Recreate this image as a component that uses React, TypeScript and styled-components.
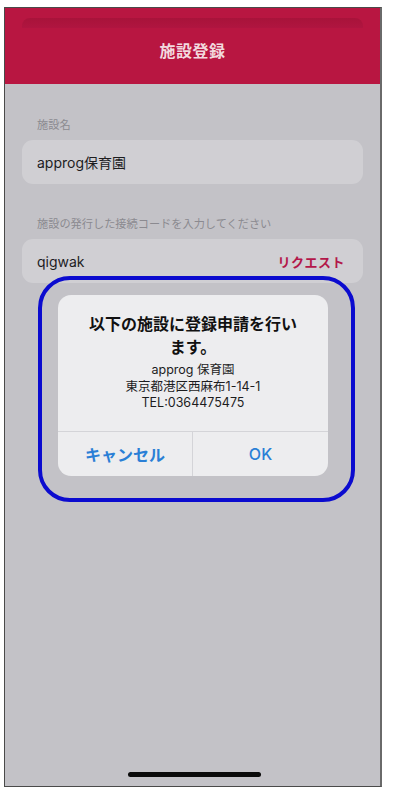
import React from 'react';
import styled, { createGlobalStyle } from 'styled-components';

const GlobalStyle = createGlobalStyle`
  html, body {
    margin: 0;
    padding: 0;
    background: #ffffff;
  }
  body {
    font-family: Inter, 'Noto Sans CJK JP', 'Noto Sans', sans-serif;
  }
`;

const Phone = styled.div`
  position: relative;
  box-sizing: border-box;
  width: 378px;
  height: 780px;
  margin: 7px 0 0 4px;
  border: 1px solid #4a4a4a;
  border-right: 2px solid #6a6a6a;
  display: flex;
  flex-direction: column;
  background: #c3c2c7;
  overflow: hidden;
`;

const Header = styled.header`
  height: 76px;
  background: #b81641;
  display: flex;
  flex-direction: column;
  align-items: stretch;
`;

const SheetEdge = styled.div`
  margin: 10px 17px 0;
  height: 10px;
  border-radius: 8px 8px 0 0;
  background: linear-gradient(#a8133a, #b01540);
`;

const Title = styled.h1`
  margin: 0;
  flex: 1;
  display: flex;
  align-items: center;
  justify-content: center;
  padding-bottom: 12px;
  font-size: 16px;
  font-weight: 600;
  color: #f2d9de;
  letter-spacing: 0.5px;
`;

const Content = styled.main`
  flex: 1;
  display: flex;
  flex-direction: column;
  padding: 34px 17px 0;
`;

const Field = styled.section`
  display: flex;
  flex-direction: column;
  gap: 8px;
  margin-bottom: 33px;
`;

const Label = styled.div`
  padding-left: 15px;
  font-size: 11.2px;
  line-height: 14px;
  color: #8b8a90;
`;

const InputBox = styled.div`
  height: 44px;
  border-radius: 11px;
  background: #d0cfd3;
  display: flex;
  align-items: center;
  justify-content: space-between;
  padding: 0 18px 0 15px;
`;

const Value = styled.span`
  font-size: 14px;
  color: #1d1d1f;
`;

const RequestLink = styled.span`
  font-size: 13px;
  font-weight: 700;
  color: #b3174a;
  letter-spacing: 0.5px;
`;

const Spacer = styled.div`
  flex: 1;
`;

const HomeIndicator = styled.div`
  align-self: center;
  width: 133px;
  height: 5px;
  border-radius: 3px;
  background: #0a0a0a;
  margin-bottom: 9px;
  margin-left: 3px;
`;

const Highlight = styled.div`
  position: absolute;
  left: 33px;
  top: 268px;
  width: 317px;
  height: 226px;
  box-sizing: border-box;
  border: 4px solid #0b0bcf;
  border-radius: 32px;
  pointer-events: none;
`;

const Alert = styled.div`
  position: absolute;
  left: 53px;
  top: 287px;
  width: 270px;
  border-radius: 13px;
  background: #ededef;
  display: flex;
  flex-direction: column;
  overflow: hidden;
`;

const AlertBody = styled.div`
  padding: 18px 16px 19px;
  display: flex;
  flex-direction: column;
  align-items: center;
  text-align: center;
`;

const AlertTitle = styled.div`
  font-size: 16px;
  font-weight: 700;
  line-height: 23px;
  color: #111;
  margin-bottom: 3px;
`;

const AlertMessage = styled.div`
  font-size: 12.5px;
  line-height: 16.5px;
  color: #1c1c1e;
`;

const Actions = styled.div`
  display: grid;
  grid-template-columns: 1fr 1fr;
  border-top: 1px solid #d4d4d8;
  height: 44px;
`;

const ActionButton = styled.button<{ divided?: boolean }>`
  border: none;
  background: transparent;
  font-family: inherit;
  font-size: 16px;
  font-weight: ${(p) => (p.divided ? 600 : 500)};
  color: #2a7fd6;
  border-right: ${(p) => (p.divided ? '1px solid #d4d4d8' : 'none')};
  padding: 0;
`;

export default function App() {
  return (
    <>
      <GlobalStyle />
      <Phone>
        <Header>
          <SheetEdge />
          <Title>施設登録</Title>
        </Header>
        <Content>
          <Field>
            <Label>施設名</Label>
            <InputBox>
              <Value>approg保育園</Value>
            </InputBox>
          </Field>
          <Field>
            <Label>施設の発行した接続コードを入力してください</Label>
            <InputBox>
              <Value>qigwak</Value>
              <RequestLink>リクエスト</RequestLink>
            </InputBox>
          </Field>
          <Spacer />
          <HomeIndicator />
        </Content>

        <Alert role="alertdialog">
          <AlertBody>
            <AlertTitle>
              以下の施設に登録申請を行い
              <br />
              ます。
            </AlertTitle>
            <AlertMessage>
              approg 保育園
              <br />
              東京都港区西麻布1-14-1
              <br />
              TEL:0364475475
            </AlertMessage>
          </AlertBody>
          <Actions>
            <ActionButton divided>キャンセル</ActionButton>
            <ActionButton>OK</ActionButton>
          </Actions>
        </Alert>
        <Highlight />
      </Phone>
    </>
  );
}
